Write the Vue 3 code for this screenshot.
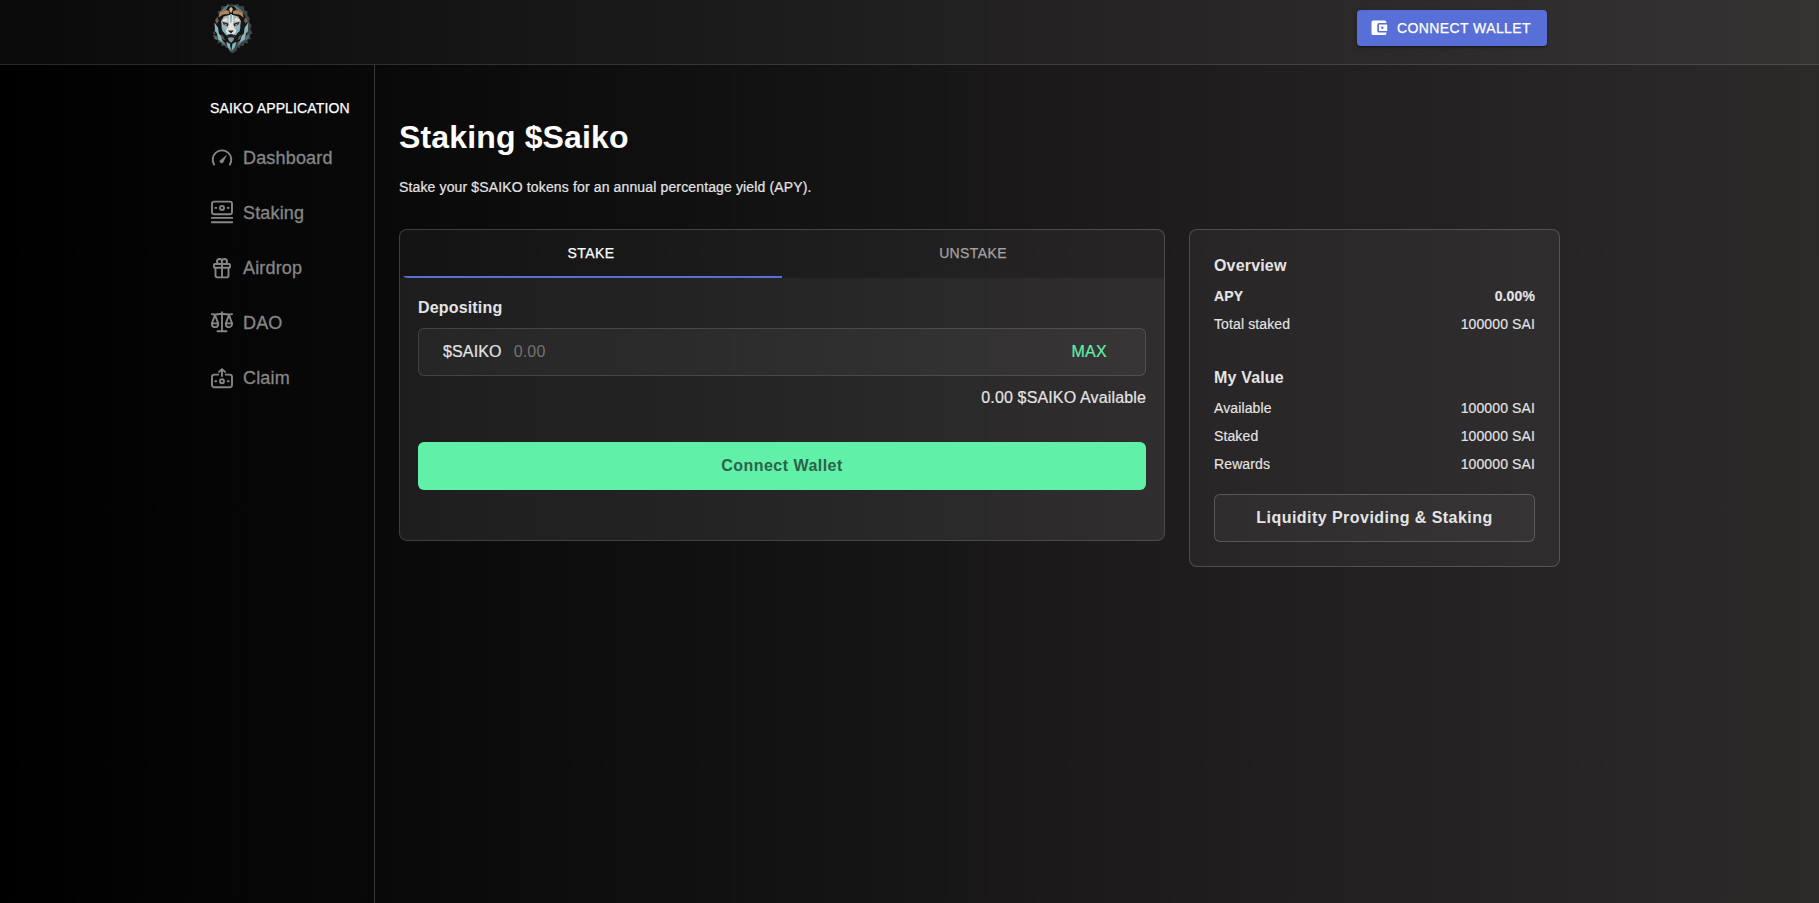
<script setup>
const nav = ['Dashboard', 'Staking', 'Airdrop', 'DAO', 'Claim']
const overview = [
  { label: 'APY', value: '0.00%', strong: true },
  { label: 'Total staked', value: '100000 SAI' },
]
const myValue = [
  { label: 'Available', value: '100000 SAI' },
  { label: 'Staked', value: '100000 SAI' },
  { label: 'Rewards', value: '100000 SAI' },
]
</script>

<template>
  <div class="page">
    <header class="header">
      <div class="header-inner">
        <svg class="logo" viewBox="36 6 130 154">
          <!-- mane -->
          <path fill="#3d4746" d="M98 9l9 7 12-5 4 7 14 1 1 11 10 5-1 10 8 11-3 8 8 14-4 9 7 14-9 5 4 12-11 2 2 11-11-2-1 10-10-2-4 9-6-3-3 12-7 2-3 10-5-8-6-4-4-12-6 3-4-9-10 2-1-10-11 2 2-11-11-2 5-12-10-5 7-14-4-9 8-14-3-8 8-11-1-10 10-5 1-11 14-1 4-7 13 5z" />
          <path fill="#131718" d="M98 18l26 8 18 24 8 30-5 24-13 16-16 8-18 16-18-16-16-8-13-16-5-24 8-30 18-24z" />
          <g fill="#86b6ba">
            <path d="M48 68l11 16 3 24-12-14zM150 68l-11 16-3 24 13-14z" />
            <path d="M54 94l14 14 6 22-15-11zM144 94l-14 14-6 22 16-11z" />
            <path d="M84 126l11 6 2 22-9-11zM114 126l-12 6-2 22 10-12z" />
            <path d="M74 26l18-12-10 18-19 6zM124 26l-18-12 10 18 19 6z" opacity=".65" />
            <path d="M43 104l10 4 5 14-10-4zM155 104l-10 4-5 14 10-4z" opacity=".4" />
            <path d="M69 120l8 6 4 12-9-5zM129 120l-8 6-4 12 9-5z" opacity=".45" />
          </g>
          <g fill="#b5835c">
            <path d="M64 37l21-7 9 5-3 7-17 2-14 9zM133 37l-21-7-9 5 3 7 17 2 13 9z" />
            <path d="M50 62l7-11 4 12-6 9zM148 62l-7-11-4 12 6 9z" opacity=".65" />
            <path d="M92 28l6-8 6 8-6 12z" fill="#e1b78d" />
            <path d="M67 104l7 4 6 14-8-4zM130 104l-7 4-6 14 8-4z" opacity=".55" />
          </g>
          <!-- face -->
          <path fill="#aab0b0" d="M76 50l22-6 22 6 8 14-4 26-12 18-14 10-14-10-13-18-3-26z" />
          <path fill="#e8e2db" d="M91 46h14l1 36 10 12-9 9H89l-9-9 10-12z" />
          <path fill="#e4dfd8" d="M72 60l12-8 6 12-14 2zM125 60l-12-8-6 12 14 2z" />
          <path fill="#6bb9c3" d="M95 42h6l-1 26h-4zM69 80l12 10 5 16-13-12zM127 80l-12 10-5 16 14-12z" />
          <path fill="#1b2225" d="M72 66l19 6-3 7-12-4zM124 66l-19 6 3 7 12-4zM88 92h19l-9 9zM82 107l15-4 17 4-11 6H92z" />
          <path fill="#64c2d0" d="M78 71l8 3-2 3-6-4zM118 71l-8 3 2 3 6-4z" />
          <path fill="#87999a" d="M88 115h20l-4 9-6 5-6-5z" />
        </svg>
        <button class="wallet">
          <svg viewBox="0 0 20 20" width="20" height="20">
            <path fill="#fff" d="M17.4 14.6v.8a1.7 1.7 0 0 1-1.7 1.7H4.2a1.7 1.7 0 0 1-1.7-1.7V4.2a1.7 1.7 0 0 1 1.7-1.7h11.5a1.7 1.7 0 0 1 1.7 1.7V5H10a1.7 1.7 0 0 0-1.7 1.7v6.2a1.7 1.7 0 0 0 1.7 1.7zM10 13.1h8.2V6.5H10zm3.3-2.1a1.2 1.2 0 1 1 0-2.4 1.2 1.2 0 0 1 0 2.4z" />
          </svg>
          <span>CONNECT WALLET</span>
        </button>
      </div>
    </header>

    <div class="body">
      <aside class="sidebar">
        <div class="side-title">SAIKO APPLICATION</div>
        <a v-for="n in nav" :key="n" class="nav-item">
          <svg class="icon" viewBox="0 0 24 24">
            <template v-if="n === 'Dashboard'">
              <path d="M4.1 19.6A9.3 9.3 0 1 1 19.9 19.6" />
              <path class="fill" d="M17.2 9.6l-3.3 6.4a2.3 2.3 0 0 1-3.8 1.6 1.6 1.6 0 0 1 .4-2.7z" />
            </template>
            <template v-else-if="n === 'Staking'">
              <rect x="2" y="1.6" width="20" height="12.6" rx="2.2" />
              <circle cx="12" cy="7.9" r="2" />
              <path d="M5.3 7.9h1M17.7 7.9h1M1.8 17.9h20.4M1.8 22.3h20.4" />
            </template>
            <template v-else-if="n === 'Airdrop'">
              <rect x="4" y="9" width="16" height="3.8" rx=".8" />
              <path d="M5.5 13v7.2a2.2 2.2 0 0 0 2.2 2.2h8.6a2.2 2.2 0 0 0 2.2-2.2V13M12 9v13M12 9H9.5a2.5 2.5 0 1 1 2.5-2.6zM12 9h2.5A2.5 2.5 0 1 0 12 6.4z" />
            </template>
            <template v-else-if="n === 'DAO'">
              <path d="M12 2.3v18.8M7.5 21.3h9M2 4.1c3 1.3 5.5-.4 10-.4s7 1.7 10 .4M5 5L1.9 13.4h6.3zM19 5l-3.2 8.4h6.3zM1.9 13.4c0 5 6.3 5 6.3 0M15.8 13.4c0 5 6.3 5 6.3 0" />
            </template>
            <template v-else>
              <path d="M8.3 9.6H4.2A2.2 2.2 0 0 0 2 11.8v8.3a2.2 2.2 0 0 0 2.2 2.2h15.6a2.2 2.2 0 0 0 2.2-2.2v-8.3a2.2 2.2 0 0 0-2.2-2.2h-4.1M12 11V4.2M9 6.9l3-2.8 3 2.8M5.3 16.2h1M17.7 16.2h1" />
              <circle cx="12" cy="16.2" r="2" />
            </template>
          </svg>
          <span>{{ n }}</span>
        </a>
      </aside>

      <main class="main">
        <h1>Staking $Saiko</h1>
        <p class="sub">Stake your $SAIKO tokens for an annual percentage yield (APY).</p>

        <div class="cards">
          <section class="card stake">
            <div class="tabs">
              <div class="tab active">STAKE</div>
              <div class="tab">UNSTAKE</div>
            </div>
            <div class="panel">
              <div class="label">Depositing</div>
              <div class="field">
                <span class="unit">$SAIKO</span>
                <span class="amount">0.00</span>
                <span class="max">MAX</span>
              </div>
              <div class="avail">0.00 $SAIKO Available</div>
              <button class="connect">Connect Wallet</button>
            </div>
          </section>

          <section class="card info">
            <h2>Overview</h2>
            <div v-for="r in overview" :key="r.label" class="row" :class="{ strong: r.strong }">
              <span>{{ r.label }}</span><span>{{ r.value }}</span>
            </div>
            <h2 class="second">My Value</h2>
            <div v-for="r in myValue" :key="r.label" class="row">
              <span>{{ r.label }}</span><span>{{ r.value }}</span>
            </div>
            <button class="liquidity">Liquidity Providing &amp; Staking</button>
          </section>
        </div>
      </main>
    </div>
  </div>
</template>

<style>
body {
  margin: 0;
  background: #000;
}
</style>

<style scoped>
.page {
  height: 903px;
  overflow: hidden;
  display: flex;
  flex-direction: column;
  box-sizing: border-box;
  background: linear-gradient(90deg, #000 0%, #151515 49%, #1a1818 55%, #282627 90%, #2b2a28 100%);
  color: #e4e4e4;
  font-family: "Liberation Sans", Arial, sans-serif;
  font-size: 16px;
}
button {
  font-family: inherit;
  border: 0;
  margin: 0;
  padding: 0;
}
.header {
  height: 64px;
  flex: none;
  background: rgba(255, 255, 255, 0.045);
  border-bottom: 1px solid rgba(255, 255, 255, 0.12);
}
.header-inner {
  width: 1337px;
  margin-left: 210px;
  display: flex;
  justify-content: space-between;
  align-items: flex-start;
}
.logo {
  width: 44px;
  height: 51px;
  margin-top: 2px;
}
.wallet {
  width: 190px;
  height: 36px;
  margin-top: 10px;
  padding-left: 12px;
  display: flex;
  align-items: center;
  gap: 8px;
  border-radius: 4px;
  background: #576fd7;
  color: #fff;
  font-size: 14px;
  letter-spacing: 0.4px;
  -webkit-text-stroke: 0.25px currentColor;
  white-space: nowrap;
  box-shadow: 0 3px 1px -2px rgba(0, 0, 0, 0.2), 0 2px 2px rgba(0, 0, 0, 0.14), 0 1px 5px rgba(0, 0, 0, 0.12);
}
.body {
  flex: 1;
  display: flex;
  padding-left: 210px;
}
.sidebar {
  width: 164px;
  border-right: 1px solid rgba(255, 255, 255, 0.2);
}
.side-title {
  margin-top: 33px;
  height: 20px;
  line-height: 20px;
  margin-bottom: 32px;
  font-size: 14px;
  letter-spacing: 0.13px;
  -webkit-text-stroke: 0.25px currentColor;
  color: #fff;
  white-space: nowrap;
}
.nav-item {
  display: flex;
  align-items: center;
  height: 15px;
  margin-bottom: 40px;
  gap: 9px;
  font-size: 18px;
  letter-spacing: 0.17px;
  -webkit-text-stroke: 0.3px currentColor;
  color: #868686;
}
.nav-item span {
  margin-top: 2px;
}
.icon {
  width: 24px;
  height: 24px;
  margin-bottom: 2px;
  fill: none;
  stroke: currentColor;
  stroke-width: 1.9;
  stroke-linecap: round;
  stroke-linejoin: round;
}
.icon .fill {
  fill: currentColor;
  stroke: none;
}
.main {
  width: 1161px;
  margin-left: 24px;
}
h1 {
  margin: 54px 0 0;
  font-size: 32px;
  line-height: 36px;
  letter-spacing: 0.15px;
  color: #fff;
}
.sub {
  margin: 22px 0 32px;
  font-size: 14px;
  line-height: 20px;
  letter-spacing: 0.14px;
  -webkit-text-stroke: 0.2px currentColor;
}
.cards {
  display: grid;
  grid-template-columns: 766px 371px;
  gap: 24px;
  align-items: start;
}
.card {
  box-sizing: border-box;
  border: 1px solid rgba(255, 255, 255, 0.18);
  border-radius: 8px;
}
.stake {
  height: 312px;
  display: flex;
  flex-direction: column;
  overflow: hidden;
  background: rgba(255, 255, 255, 0.045);
}
.tabs {
  display: flex;
  flex: none;
  height: 48px;
  border-radius: 8px;
  overflow: hidden;
}
.tab {
  flex: 1;
  box-sizing: border-box;
  line-height: 46px;
  font-size: 14px;
  letter-spacing: 0.38px;
  -webkit-text-stroke: 0.25px currentColor;
  text-align: center;
  color: #a3a3a3;
}
.tab.active {
  color: #fff;
  border-bottom: 2px solid #576fd7;
}
.panel {
  flex: 1;
  padding: 20px 18px 0;
  background: rgba(255, 255, 255, 0.045);
}
.label {
  font-weight: bold;
  line-height: 20px;
  letter-spacing: 0.17px;
}
.field {
  box-sizing: border-box;
  height: 48px;
  margin-top: 10px;
  padding: 0 38px 0 24px;
  display: flex;
  align-items: center;
  letter-spacing: 0.15px;
  border: 1px solid rgba(255, 255, 255, 0.13);
  border-radius: 6px;
  background: rgba(255, 255, 255, 0.04);
}
.unit,
.max,
.avail {
  -webkit-text-stroke: 0.2px currentColor;
}
.amount {
  margin-left: 12px;
  color: #737373;
}
.max {
  margin-left: auto;
  letter-spacing: 0.3px;
  color: #5ff0a8;
}
.avail {
  margin-top: 12px;
  line-height: 20px;
  text-align: right;
  letter-spacing: 0.15px;
}
.connect,
.liquidity {
  box-sizing: border-box;
  display: block;
  width: 100%;
  height: 48px;
  border-radius: 6px;
  font-size: 16px;
  font-weight: bold;
  letter-spacing: 0.457px;
}
.connect {
  margin-top: 34px;
  background: #60f0a8;
  color: #2c6249;
}
.info {
  height: 338px;
  padding: 26px 24px 0;
  background: rgba(255, 255, 255, 0.045);
}
h2 {
  margin: 0 0 6px;
  font-size: 16px;
  line-height: 20px;
  letter-spacing: 0.17px;
}
h2.second {
  margin-top: 30px;
}
.row {
  display: flex;
  justify-content: space-between;
  height: 28px;
  line-height: 28px;
  font-size: 14px;
  letter-spacing: 0.12px;
  -webkit-text-stroke: 0.15px currentColor;
}
.row.strong {
  font-weight: bold;
}
.liquidity {
  margin-top: 16px;
  border: 1px solid rgba(255, 255, 255, 0.2);
  background: rgba(255, 255, 255, 0.035);
  color: #e4e4e4;
}
</style>
